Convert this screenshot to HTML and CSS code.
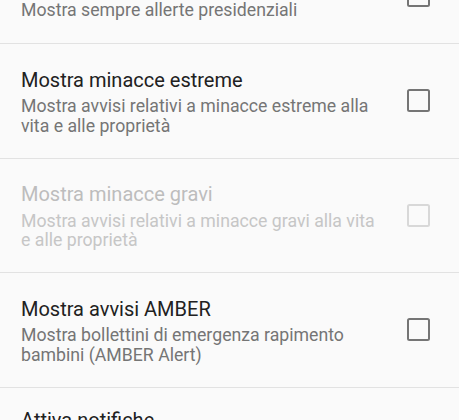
FILE: index.html
```html
<!DOCTYPE html>
<html lang="it">
<head>
<meta charset="utf-8">
<link rel="stylesheet" href="styles.css">
</head>
<body>
<div class="list">
  <div class="row first">
    <div class="text">
      <div class="title">Allerte presidenziali</div>
      <div class="summary">Mostra sempre allerte presidenziali</div>
    </div>
    <span class="check"></span>
  </div>
  <div class="row">
    <div class="text">
      <div class="title">Mostra minacce estreme</div>
      <div class="summary">Mostra avvisi relativi a minacce estreme alla vita e alle proprietà</div>
    </div>
    <span class="check"></span>
  </div>
  <div class="row disabled">
    <div class="text">
      <div class="title">Mostra minacce gravi</div>
      <div class="summary">Mostra avvisi relativi a minacce gravi alla vita e alle proprietà</div>
    </div>
    <span class="check"></span>
  </div>
  <div class="row">
    <div class="text">
      <div class="title">Mostra avvisi AMBER</div>
      <div class="summary">Mostra bollettini di emergenza rapimento bambini (AMBER Alert)</div>
    </div>
    <span class="check"></span>
  </div>
  <div class="row last">
    <div class="text">
      <div class="title">Attiva notifiche</div>
      <div class="summary">Mostra le notifiche di emergenza</div>
    </div>
    <span class="check"></span>
  </div>
</div>
</body>
</html>
```

FILE: styles.css
```css
html, body {
  margin: 0;
  padding: 0;
  background: #fafafa;
  overflow: hidden;
}
body {
  width: 459px;
  height: 420px;
  font-family: Roboto, "Noto Sans", sans-serif;
}
.list {
  margin-top: -52.5px;
}
.row {
  display: flex;
  align-items: center;
  padding: 0 29px 0 21px;
  border-bottom: 1px solid #e2e2e2;
}
.text {
  flex: 1;
  min-width: 0;
  padding: 22.5px 0 21.6px;
}
.title {
  font-size: 20px;
  line-height: 26px;
  color: #212121;
}
.summary {
  margin-top: 4.5px;
  font-size: 17.7px;
  line-height: 19.5px;
  color: #757575;
}
.check {
  flex: none;
  width: 23px;
  height: 23px;
  box-sizing: border-box;
  margin-left: 27px;
  border: 2.5px solid #757575;
  border-radius: 2.5px;
}
.first .text {
  padding-bottom: 23px;
}
.disabled .title {
  color: #bdbdbd;
}
.disabled .summary {
  color: #c6c6c6;
}
.disabled .check {
  border-color: #d8d8d8;
}
.last {
  border-bottom: none;
}
.last .text {
  padding-top: 19px;
}
```
